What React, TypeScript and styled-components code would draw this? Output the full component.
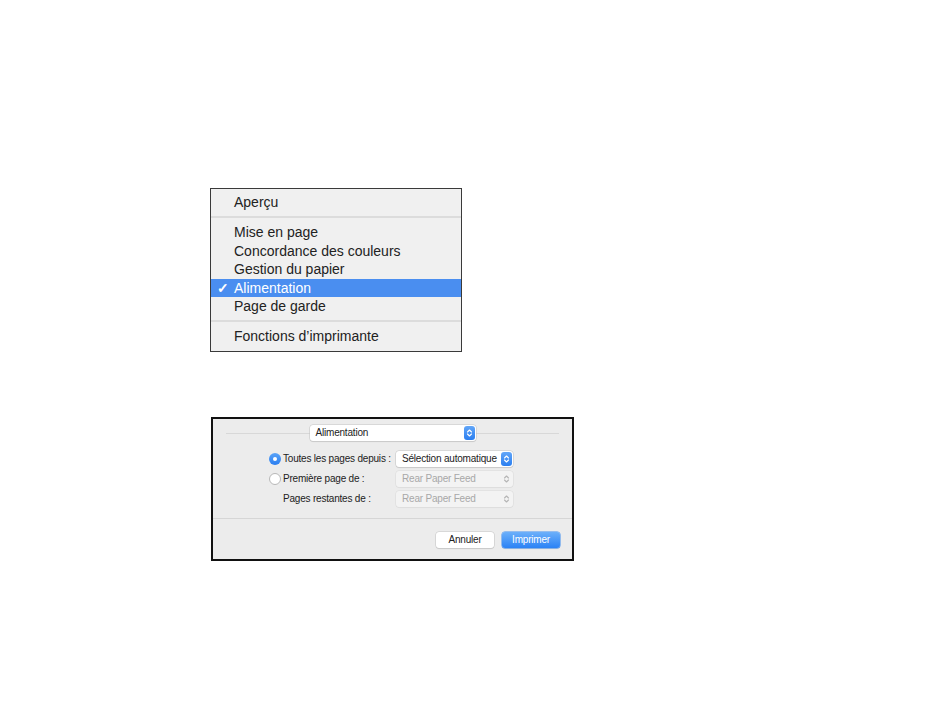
import React from 'react';
import styled, { createGlobalStyle } from 'styled-components';

const GlobalStyle = createGlobalStyle`
  body {
    margin: 0;
    background: #fff;
    font-family: 'Liberation Sans', Arial, sans-serif;
  }
`;

const menuItems = [
  ['Aperçu'],
  ['Mise en page', 'Concordance des couleurs', 'Gestion du papier', 'Alimentation', 'Page de garde'],
  ['Fonctions d’imprimante'],
];

const Stepper = ({ disabled }: { disabled?: boolean }) => (
  <StepBox $disabled={disabled}>
    <svg width="7" height="10" viewBox="0 0 7 10">
      <path
        d="M1.5 4 L3.5 2 L5.5 4 M1.5 6 L3.5 8 L5.5 6"
        fill="none"
        stroke={disabled ? '#b5b5b5' : '#fff'}
        strokeWidth="1.1"
        strokeLinecap="round"
        strokeLinejoin="round"
      />
    </svg>
  </StepBox>
);

const App = () => {
  return (
    <Page>
      <GlobalStyle />
      <Menu>
        {menuItems.map((group, gi) => (
          <React.Fragment key={gi}>
            {gi > 0 && <Separator />}
            {group.map((label) => (
              <MenuItem key={label} $active={label === 'Alimentation'}>
                {label === 'Alimentation' && <Check>✓</Check>}
                {label}
              </MenuItem>
            ))}
          </React.Fragment>
        ))}
      </Menu>

      <Dialog>
        <TopBar>
          <Popup $width={166}>
            <PopupText>Alimentation</PopupText>
            <Stepper />
          </Popup>
        </TopBar>

        <Form>
          <Radio $checked />
          <Label>Toutes les pages depuis :</Label>
          <Popup $width={117}>
            <PopupText>Sélection automatique</PopupText>
            <Stepper />
          </Popup>

          <Radio />
          <Label>Première page de :</Label>
          <Popup $width={117} $disabled>
            <PopupText>Rear Paper Feed</PopupText>
            <Stepper disabled />
          </Popup>

          <span />
          <Label>Pages restantes de :</Label>
          <Popup $width={117} $disabled>
            <PopupText>Rear Paper Feed</PopupText>
            <Stepper disabled />
          </Popup>
        </Form>

        <Divider />

        <Buttons>
          <Button>Annuler</Button>
          <Button $primary>Imprimer</Button>
        </Buttons>
      </Dialog>
    </Page>
  );
};

export default App;

const Page = styled.div`
  display: flex;
  flex-direction: column;
  align-items: flex-start;
  padding: 188px 0 0 210px;
`;

const Menu = styled.div`
  width: 250px;
  padding: 4px 0 5px;
  background: #f0f0f0;
  border: 1px solid #3a3a3a;
`;

const MenuItem = styled.div<{ $active?: boolean }>`
  position: relative;
  height: 18.4px;
  line-height: 18.4px;
  padding-left: 23px;
  font-size: 14px;
  color: ${(p) => (p.$active ? '#fff' : '#222')};
  background: ${(p) => (p.$active ? '#4a8ef0' : 'transparent')};
`;

const Check = styled.span`
  position: absolute;
  left: 6px;
  top: 0;
  font-size: 14px;
  font-weight: bold;
`;

const Separator = styled.div`
  height: 12px;
  display: flex;
  align-items: center;

  &::after {
    content: '';
    flex: 1;
    height: 2px;
    background: #dcdcdc;
  }
`;

const Dialog = styled.div`
  width: 359px;
  margin: 65px 0 0 1px;
  background: #ececec;
  border: 2px solid #111;
  font-size: 10px;
  letter-spacing: -0.2px;
  color: #222;
`;

const TopBar = styled.div`
  position: relative;
  display: flex;
  justify-content: center;
  padding: 6px 0 0 0;

  &::before {
    content: '';
    position: absolute;
    left: 13px;
    right: 13px;
    top: 14px;
    height: 1px;
    background: #d8d8d8;
  }
`;

const Popup = styled.div<{ $width: number; $disabled?: boolean }>`
  position: relative;
  box-sizing: border-box;
  width: ${(p) => p.$width}px;
  height: 16px;
  display: flex;
  align-items: center;
  justify-content: space-between;
  padding: 0 1px 0 6px;
  border-radius: 3px;
  background: ${(p) => (p.$disabled ? '#f3f3f3' : '#fff')};
  color: ${(p) => (p.$disabled ? '#a8a8a8' : '#222')};
  box-shadow: 0 0 0 0.5px ${(p) => (p.$disabled ? '#dadada' : '#c4c4c4')},
    0 1px 1px rgba(0, 0, 0, ${(p) => (p.$disabled ? 0.04 : 0.12)});
`;

const PopupText = styled.span`
  white-space: nowrap;
`;

const StepBox = styled.span<{ $disabled?: boolean }>`
  width: 11px;
  height: 14px;
  flex-shrink: 0;
  border-radius: 3px;
  display: flex;
  align-items: center;
  justify-content: center;
  background: ${(p) =>
    p.$disabled ? 'transparent' : 'linear-gradient(#62a6f8, #2a7ef0)'};
`;

const Form = styled.div`
  display: grid;
  grid-template-columns: 11px 111px 117px;
  column-gap: 2px;
  grid-auto-rows: 20px;
  align-items: center;
  padding: 8px 0 0 57px;
`;

const Radio = styled.span<{ $checked?: boolean }>`
  box-sizing: border-box;
  width: 12px;
  height: 12px;
  border-radius: 50%;
  margin-left: -1px;
  background: ${(p) => (p.$checked ? 'linear-gradient(#5aa3f8, #2a7ef0)' : '#fff')};
  border: ${(p) => (p.$checked ? 'none' : '1px solid #b8b8b8')};
  display: flex;
  align-items: center;
  justify-content: center;

  &::after {
    content: '';
    width: 4px;
    height: 4px;
    border-radius: 50%;
    background: #fff;
    display: ${(p) => (p.$checked ? 'block' : 'none')};
  }
`;

const Label = styled.span`
  white-space: nowrap;
  color: #222;
`;

const Divider = styled.div`
  height: 1px;
  margin-top: 9px;
  background: #d6d6d6;
`;

const Buttons = styled.div`
  display: flex;
  justify-content: flex-end;
  gap: 8px;
  padding: 13px 12px 11px 0;
`;

const Button = styled.div<{ $primary?: boolean }>`
  width: 58px;
  height: 16px;
  line-height: 16px;
  text-align: center;
  border-radius: 3px;
  font-size: 10px;
  color: ${(p) => (p.$primary ? '#fff' : '#222')};
  background: ${(p) => (p.$primary ? 'linear-gradient(#6cb0fa, #2b82f5)' : '#fff')};
  box-shadow: 0 0 0 0.5px ${(p) => (p.$primary ? '#3f8df2' : '#c4c4c4')},
    0 1px 1px rgba(0, 0, 0, 0.12);
`;
